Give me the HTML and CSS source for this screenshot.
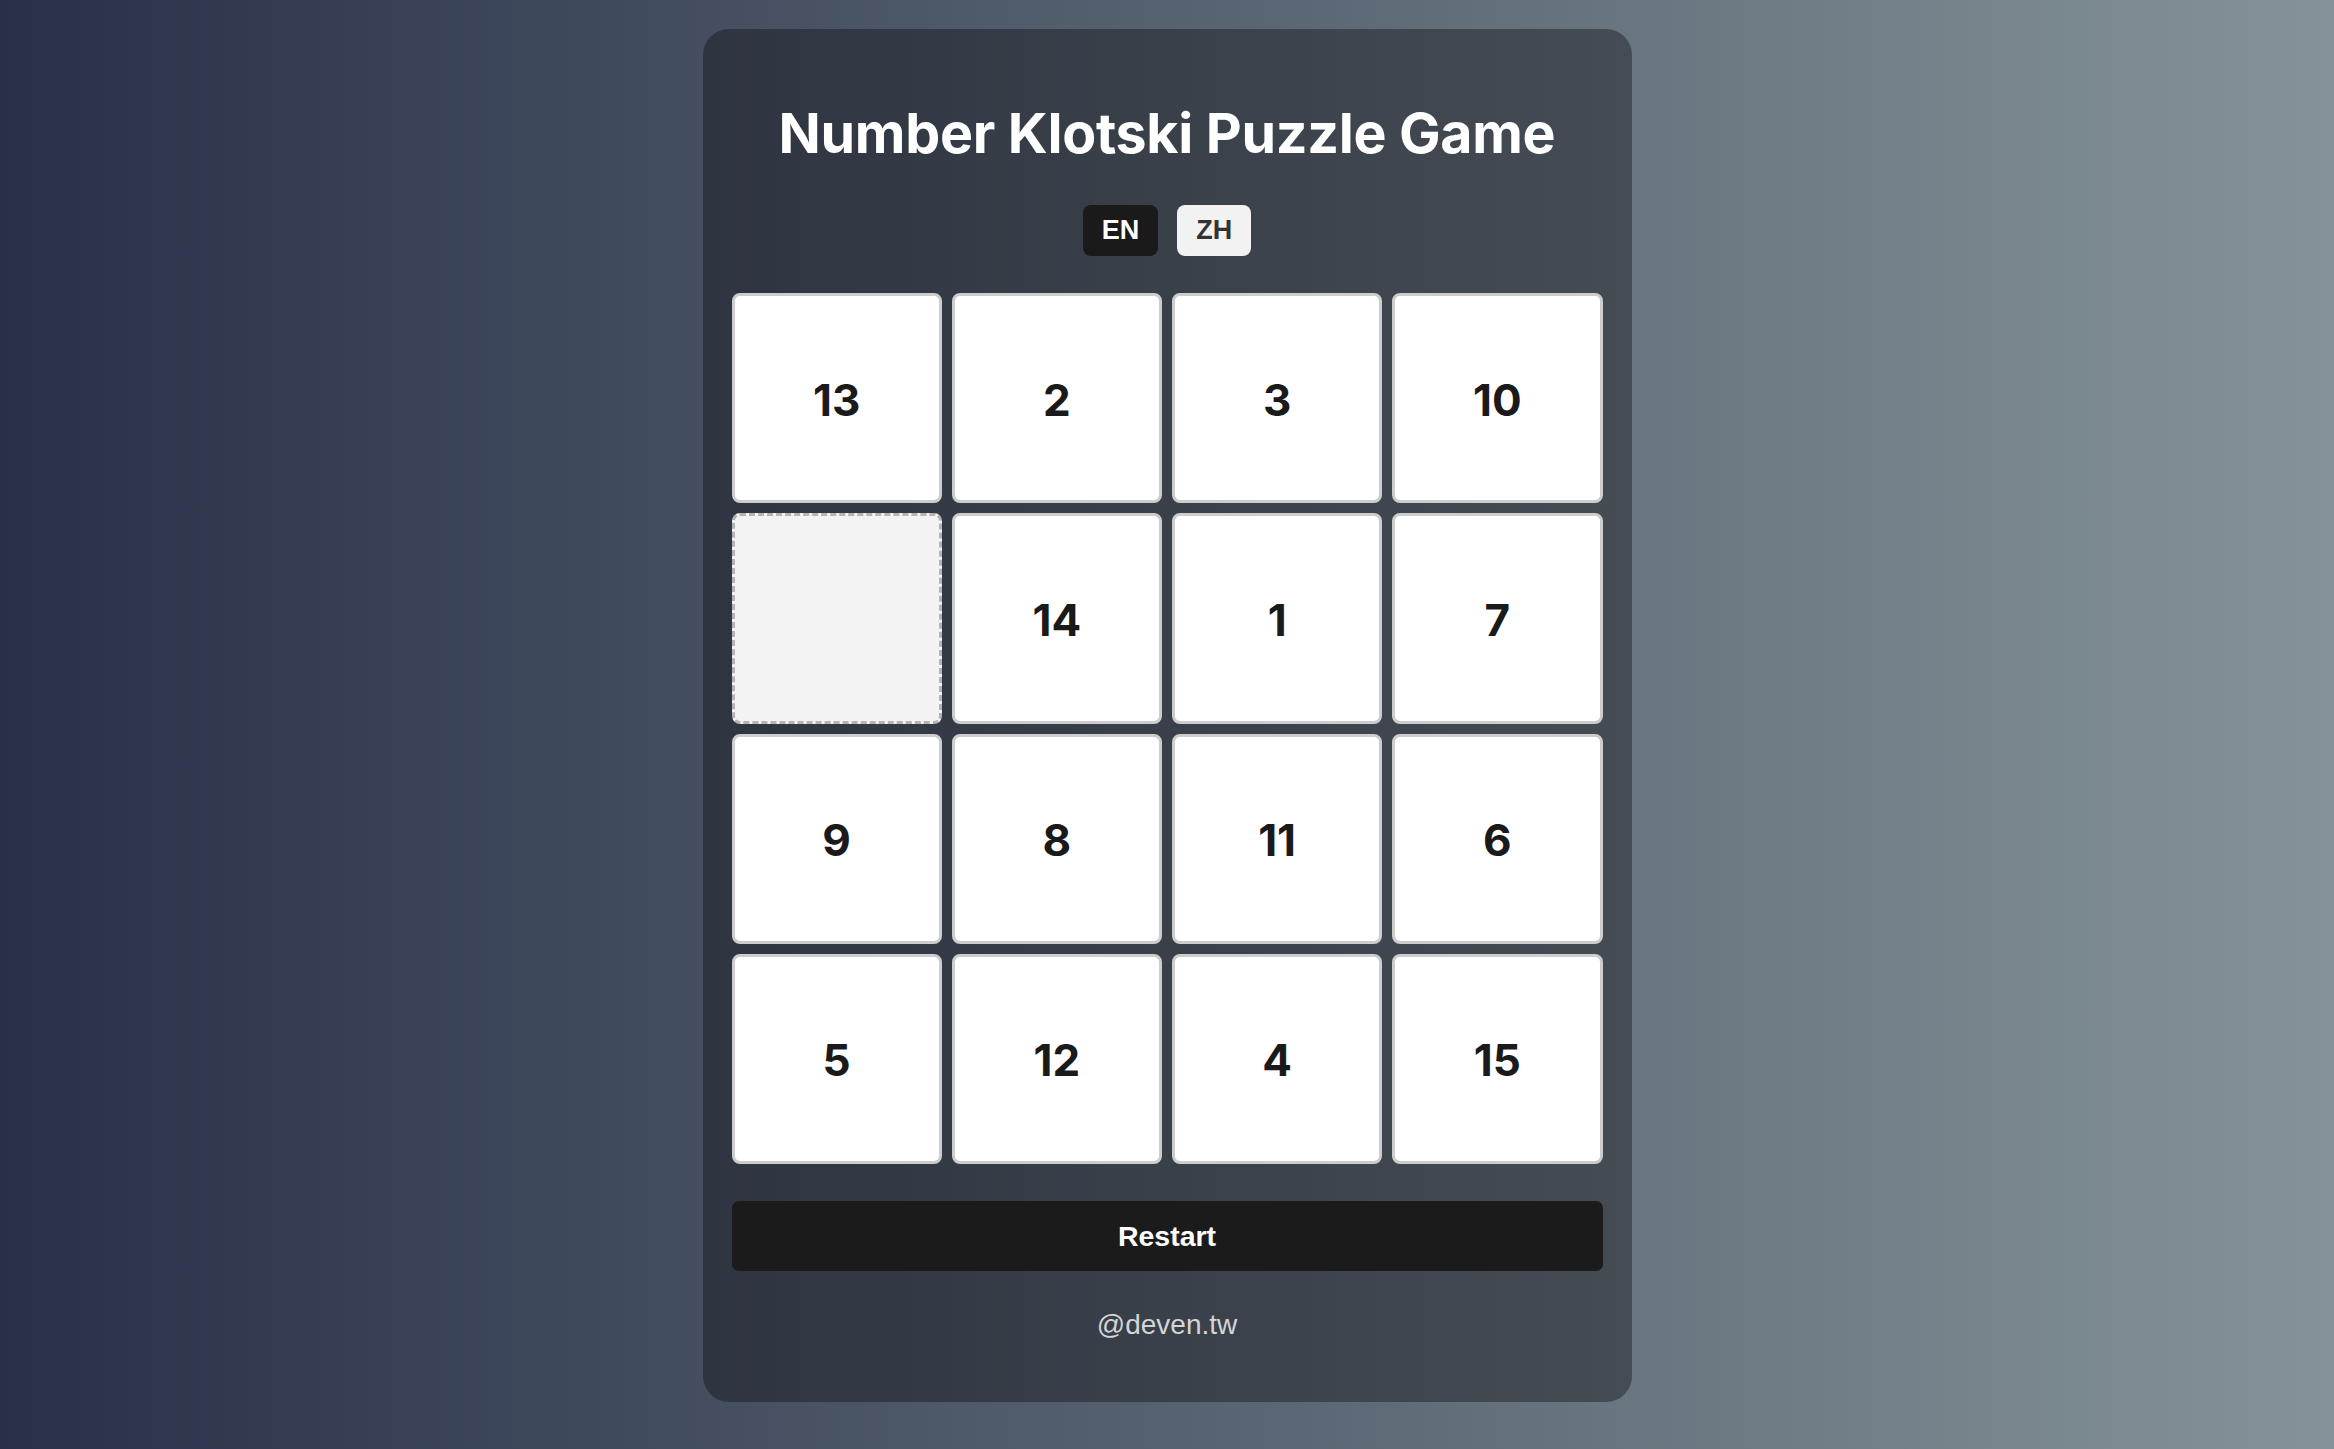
FILE: index.html
```html
<!DOCTYPE html>
<html lang="en">
<head>
<meta charset="utf-8">
<title>Number Klotski Puzzle Game</title>
<link rel="stylesheet" href="styles.css">
</head>
<body>
<main class="card">
  <h1 class="title">Number Klotski Puzzle Game</h1>
  <div class="lang">
    <button class="lang-btn active">EN</button>
    <button class="lang-btn">ZH</button>
  </div>
  <div class="board">
    <div class="tile">13</div>
    <div class="tile">2</div>
    <div class="tile">3</div>
    <div class="tile">10</div>
    <div class="tile empty"></div>
    <div class="tile">14</div>
    <div class="tile">1</div>
    <div class="tile">7</div>
    <div class="tile">9</div>
    <div class="tile">8</div>
    <div class="tile">11</div>
    <div class="tile">6</div>
    <div class="tile">5</div>
    <div class="tile">12</div>
    <div class="tile">4</div>
    <div class="tile">15</div>
  </div>
  <button class="restart">Restart</button>
  <p class="footer">@deven.tw</p>
</main>
</body>
</html>
```

FILE: styles.css
```css
* {
  box-sizing: border-box;
}

html, body {
  margin: 0;
  padding: 0;
}

body {
  min-height: 100vh;
  background: linear-gradient(to right, #283048, #859398);
  display: flex;
  justify-content: center;
  align-items: flex-start;
  padding-top: 29px;
  font-family: "Liberation Sans", Arial, sans-serif;
}

.card {
  width: 929px;
  padding: 71px 29px 61px;
  border-radius: 26px;
  background: rgba(14, 14, 18, 0.4);
  display: flex;
  flex-direction: column;
  align-items: stretch;
}

.title {
  margin: 0;
  font-family: Inter, "Noto Sans", sans-serif;
  font-weight: 700;
  font-size: 55.5px;
  line-height: 66px;
  color: #ffffff;
  text-align: center;
  letter-spacing: -0.3px;
}

.lang {
  margin-top: 39px;
  display: flex;
  justify-content: center;
  gap: 19px;
}

.lang-btn {
  height: 51px;
  padding: 0 19px;
  border: none;
  border-radius: 8px;
  font-family: "Liberation Sans", Arial, sans-serif;
  font-weight: 700;
  font-size: 27px;
  background: #f2f2f2;
  color: #333333;
  cursor: pointer;
}

.lang-btn.active {
  background: #1a1a1a;
  color: #ffffff;
}

.board {
  margin-top: 37px;
  display: grid;
  grid-template-columns: repeat(4, 1fr);
  gap: 10px;
}

.tile {
  aspect-ratio: 1 / 1;
  background: #ffffff;
  border: 3px solid #cdcdcd;
  border-radius: 8px;
  display: flex;
  align-items: center;
  justify-content: center;
  padding-top: 3px;
  font-family: Inter, "Noto Sans", sans-serif;
  font-weight: 700;
  font-size: 44px;
  color: #1a1a1a;
}

.tile.empty {
  background: #f3f3f3;
  border: 3px dashed #b4b4b4;
}

.restart {
  margin-top: 37px;
  height: 70px;
  border: none;
  border-radius: 7px;
  background: #1b1b1b;
  color: #ffffff;
  font-family: "Liberation Sans", Arial, sans-serif;
  font-weight: 700;
  font-size: 28.5px;
  cursor: pointer;
}

.footer {
  margin: 38px 0 0;
  text-align: center;
  font-size: 28px;
  line-height: 32px;
  color: #d3d5d8;
}
```
